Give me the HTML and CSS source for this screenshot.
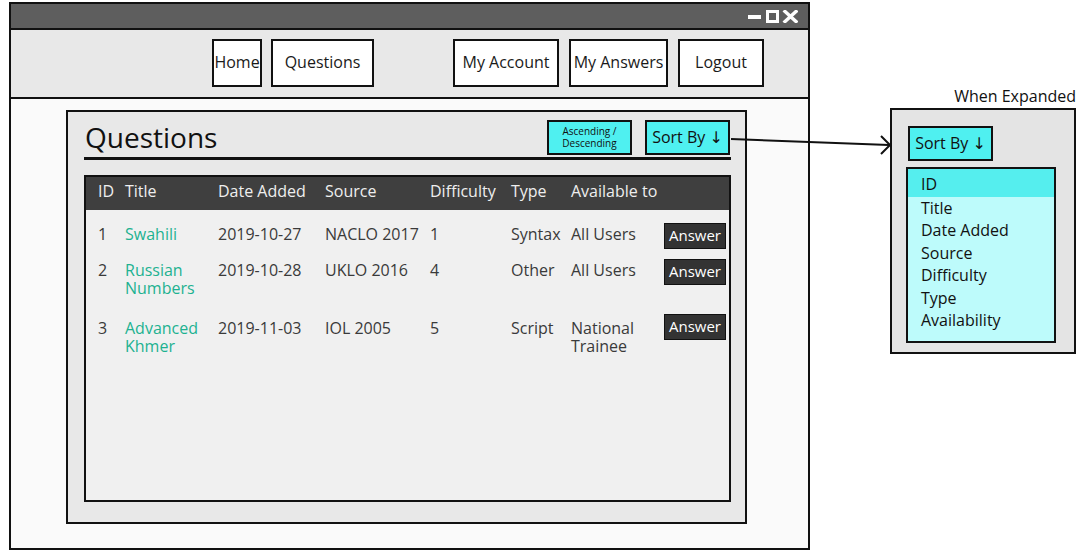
FILE: index.html
```html
<!DOCTYPE html>
<html lang="en">
<head>
<meta charset="utf-8">
<title>Questions</title>
<link rel="stylesheet" href="styles.css">
</head>
<body>
<div class="canvas">
  <div class="window">
    <div class="titlebar">
      <svg class="controls" width="50" height="13" viewBox="0 0 50 13">
        <rect x="0" y="5" width="13" height="4" fill="#fff"/>
        <rect x="19.5" y="1.5" width="10" height="10" fill="none" stroke="#fff" stroke-width="3"/>
        <path d="M37 1.5 L48 11.5 M48 1.5 L37 11.5" stroke="#fff" stroke-width="3.5" stroke-linecap="square"/>
      </svg>
    </div>
    <nav class="nav">
      <div class="nav-group">
        <a class="nav-btn nav-home">Home</a>
        <a class="nav-btn nav-questions">Questions</a>
      </div>
      <div class="nav-group nav-group-right">
        <a class="nav-btn nav-account">My Account</a>
        <a class="nav-btn nav-answers">My Answers</a>
        <a class="nav-btn nav-logout">Logout</a>
      </div>
    </nav>
    <main class="content">
      <section class="panel">
        <header class="panel-head">
          <h1 class="panel-title">Questions</h1>
          <div class="actions">
            <button class="cyan-btn cyan-small"><span class="line">Ascending /</span><span class="line">Descending</span></button>
            <button class="cyan-btn">Sort By ↓</button>
          </div>
        </header>
        <div class="table">
          <div class="thead cols">
            <span>ID</span><span>Title</span><span>Date Added</span><span>Source</span><span>Difficulty</span><span>Type</span><span>Available to</span><span></span>
          </div>
          <div class="tbody">
            <div class="row cols">
              <span class="cell">1</span><a class="cell link">Swahili</a><span class="cell">2019-10-27</span><span class="cell">NACLO 2017</span><span class="cell">1</span><span class="cell">Syntax</span><span class="cell">All Users</span><button class="answer-btn">Answer</button>
            </div>
            <div class="row row-wrap cols">
              <span class="cell">2</span><a class="cell link">Russian Numbers</a><span class="cell">2019-10-28</span><span class="cell">UKLO 2016</span><span class="cell">4</span><span class="cell">Other</span><span class="cell">All Users</span><button class="answer-btn">Answer</button>
            </div>
            <div class="row row-wrap row-low cols">
              <span class="cell">3</span><a class="cell link">Advanced Khmer</a><span class="cell">2019-11-03</span><span class="cell">IOL 2005</span><span class="cell">5</span><span class="cell">Script</span><span class="cell">National Trainee</span><button class="answer-btn">Answer</button>
            </div>
          </div>
        </div>
      </section>
    </main>
  </div>

  <aside class="expanded">
    <div class="exp-label">When Expanded</div>
    <div class="exp-panel">
      <button class="cyan-btn exp-btn">Sort By ↓</button>
      <ul class="sort-list">
        <li class="sort-item active">ID</li>
        <li class="sort-item">Title</li>
        <li class="sort-item">Date Added</li>
        <li class="sort-item">Source</li>
        <li class="sort-item">Difficulty</li>
        <li class="sort-item">Type</li>
        <li class="sort-item">Availability</li>
      </ul>
    </div>
  </aside>

  <svg class="arrow" width="1090" height="559" viewBox="0 0 1090 559">
    <path d="M731 139 L889 145" stroke="#111" stroke-width="2" fill="none"/>
    <path d="M881 136 L890 145 L881 154" stroke="#111" stroke-width="2" fill="none"/>
  </svg>
</div>
</body>
</html>
```
FILE: styles.css
```css
* { box-sizing: border-box; }

html, body {
  margin: 0;
  padding: 0;
  background: #ffffff;
}

body {
  font-family: "Open Sans", "DejaVu Sans", sans-serif;
  color: #111;
}

.canvas {
  position: relative;
  width: 1090px;
  height: 559px;
  display: flex;
  align-items: flex-start;
}

.window {
  margin: 2px 0 0 9px;
  width: 801px;
  height: 548px;
  border: 2px solid #111;
  display: flex;
  flex-direction: column;
  background: #fafafa;
}

.titlebar {
  height: 26px;
  background: #5e5e5e;
  border-bottom: 2px solid #111;
  display: flex;
  justify-content: flex-end;
  align-items: center;
  padding-right: 10px;
}

.controls { display: block; }

.nav {
  height: 69px;
  background: #e8e8e8;
  border-bottom: 2px solid #111;
  display: flex;
  align-items: center;
  padding-left: 201px;
  padding-bottom: 1px;
}

.nav-group {
  display: flex;
  gap: 9px;
}

.nav-group-right {
  margin-left: 79px;
  gap: 10px;
}

.nav-btn {
  height: 48px;
  border: 2px solid #111;
  background: #fff;
  display: flex;
  align-items: center;
  justify-content: center;
  font-size: 16px;
  color: #1a1a1a;
  padding-bottom: 2px;
}

.nav-home { width: 50px; }
.nav-questions { width: 103px; }
.nav-account { width: 106px; }
.nav-answers { width: 99px; }
.nav-logout { width: 86px; }

.content {
  flex: 1;
  padding: 11px 61px 24px 55px;
  display: flex;
}

.panel {
  flex: 1;
  border: 2px solid #111;
  background: #e8e8e8;
  padding: 8px 14px 20px 16px;
  display: flex;
  flex-direction: column;
}

.panel-head {
  display: flex;
  justify-content: space-between;
  align-items: center;
  border-bottom: 3px solid #111;
  padding-bottom: 2px;
}

.panel-title {
  margin: 0;
  font-size: 28px;
  font-weight: 400;
  line-height: 35px;
  color: #111;
  padding-left: 1px;
}

.actions {
  display: flex;
  gap: 13px;
  padding-right: 1px;
}

.cyan-btn {
  width: 85px;
  height: 35px;
  border: 2px solid #111;
  background: #4ff0f0;
  font-family: inherit;
  font-size: 16px;
  color: #111;
  padding: 0 0 2px;
  cursor: pointer;
}

.cyan-small {
  display: flex;
  flex-direction: column;
  align-items: center;
  justify-content: center;
  padding: 0 0 1px;
}

.cyan-small .line {
  display: block;
  font-size: 10px;
  line-height: 12px;
}

.table {
  flex: 1;
  margin-top: 15px;
  border: 2px solid #111;
  background: #f0f0f0;
  display: flex;
  flex-direction: column;
}

.cols {
  display: grid;
  grid-template-columns: 27px 93px 107px 105px 81px 60px 93px 62px;
  padding-left: 12px;
}

.thead {
  height: 33px;
  background: #3f3f3f;
  color: #eeeeee;
  font-size: 16px;
  line-height: 24px;
  align-items: center;
  padding-bottom: 6px;
}

.tbody {
  padding-top: 13px;
}

.row {
  align-items: start;
  padding-bottom: 10px;
  font-size: 16px;
  color: #3a3a3a;
}

.row-wrap { padding-bottom: 17px; }

.cell {
  line-height: 18px;
  padding-top: 2px;
  padding-right: 4px;
}

.row-low .cell { padding-top: 5px; }

.link {
  color: #1db291;
}

.answer-btn {
  width: 62px;
  height: 26px;
  background: #333;
  border: 1px solid #111;
  color: #fff;
  font-family: inherit;
  font-size: 15px;
  padding: 0 0 2px;
}

.expanded {
  margin: 87px 0 0 80px;
  width: 186px;
  display: flex;
  flex-direction: column;
}

.exp-label {
  text-align: right;
  font-size: 16px;
  line-height: 18px;
  color: #111;
}

.exp-panel {
  margin-top: 3px;
  height: 246px;
  border: 2px solid #111;
  background: #e4e4e4;
  padding: 16px 18px 0 14px;
  display: flex;
  flex-direction: column;
  align-items: flex-start;
}

.exp-btn {
  margin-left: 2px;
}

.sort-list {
  list-style: none;
  margin: 6px 0 0;
  padding: 0 0 9px;
  width: 150px;
  border: 2px solid #111;
  background: #bdfbfb;
}

.sort-item {
  font-size: 16px;
  line-height: 22.5px;
  padding-left: 13px;
  color: #111;
}

.sort-item.active {
  background: #55eeee;
  padding-top: 4px;
  padding-bottom: 1px;
}

.arrow {
  position: absolute;
  left: 0;
  top: 0;
  pointer-events: none;
}
```
